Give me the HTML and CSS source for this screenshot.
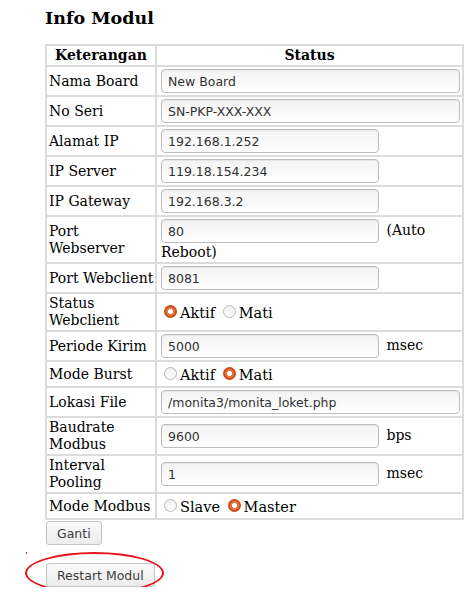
FILE: index.html
```html
<!DOCTYPE html>
<html>
<head>
<meta charset="utf-8">
<link rel="stylesheet" href="styles.css">
</head>
<body>
<div class="page">
  <h2 class="title">Info Modul</h2>
  <table class="info">
    <colgroup><col class="col1"><col class="col2"></colgroup>
    <tr><th>Keterangan</th><th>Status</th></tr>
    <tr><td>Nama Board</td><td><input class="long" value="New Board"></td></tr>
    <tr><td>No Seri</td><td><input class="long" value="SN-PKP-XXX-XXX"></td></tr>
    <tr><td>Alamat IP</td><td><input class="short" value="192.168.1.252"></td></tr>
    <tr><td>IP Server</td><td><input class="short" value="119.18.154.234"></td></tr>
    <tr><td>IP Gateway</td><td><input class="short" value="192.168.3.2"></td></tr>
    <tr><td>Port<br>Webserver</td><td class="wrapval"><input class="short" value="80"> (Auto Reboot)</td></tr>
    <tr><td>Port Webclient</td><td><input class="short" value="8081"></td></tr>
    <tr><td>Status<br>Webclient</td><td class="radios"><span class="radio on"></span>Aktif <span class="radio"></span>Mati</td></tr>
    <tr><td>Periode Kirim</td><td><input class="short" value="5000"> msec</td></tr>
    <tr><td>Mode Burst</td><td class="radios"><span class="radio"></span>Aktif <span class="radio on"></span>Mati</td></tr>
    <tr><td>Lokasi File</td><td><input class="long" value="/monita3/monita_loket.php"></td></tr>
    <tr><td>Baudrate<br>Modbus</td><td><input class="short" value="9600"> bps</td></tr>
    <tr><td>Interval<br>Pooling</td><td><input class="short" value="1"> msec</td></tr>
    <tr><td>Mode Modbus</td><td class="radios"><span class="radio"></span>Slave <span class="radio on"></span>Master</td></tr>
  </table>
  <div class="actions">
    <button class="btn">Ganti</button>
    <div class="restart">
      <button class="btn">Restart Modul</button>
      <span class="ellipse"></span>
      <span class="dot d1"></span>
      <span class="dot d2"></span>
    </div>
  </div>
</div>
</body>
</html>
```

FILE: styles.css
```css
html, body {
  margin: 0;
  padding: 0;
  background: #ffffff;
}
.page {
  padding: 8px 0 0 45px;
  font-family: "DejaVu Serif", serif;
  color: #000;
}
.title {
  margin: 0 0 15px 0;
  font-size: 17.5px;
  font-weight: bold;
  line-height: 21px;
}
.info {
  border-collapse: collapse;
  table-layout: fixed;
  width: 419px;
  border: 1px solid #dadada;
}
.col1 { width: 110px; }
.info th, .info td {
  border: 2px solid #dcdcdc;
  font-size: 14px;
  line-height: 17px;
  padding: 1px 2px;
  text-align: left;
  vertical-align: middle;
  white-space: nowrap;
}
.info th {
  font-weight: bold;
  text-align: center;
  padding: 1px 2px 1px;
}
.info td + td {
  padding-left: 4px;
  white-space: normal;
}
input {
  box-sizing: border-box;
  height: 24px;
  margin: 1px 0;
  padding: 0 6px;
  border: 1px solid #bdbdbd;
  border-radius: 4px;
  background: linear-gradient(#f3f3f3, #fafafa 60%, #ffffff);
  font-family: "DejaVu Sans", sans-serif;
  font-size: 12.5px;
  color: #333;
  vertical-align: middle;
  box-shadow: inset 0 1px 1px rgba(0,0,0,0.06);
}
input.long { width: 299px; }
input.short { width: 218px; margin-right: 3px; }
.info td.radios {
  padding-top: 5px;
  padding-bottom: 2px;
  font-size: 14.5px;
}
.radio {
  display: inline-block;
  box-sizing: border-box;
  width: 13px;
  height: 13px;
  border-radius: 50%;
  border: 1px solid #b8b8b8;
  background: linear-gradient(#f0f0f0, #ffffff);
  vertical-align: 0px;
  margin: 0 3px 0 3px;
}
.radio.on {
  border: none;
  background: radial-gradient(circle, #ffffff 0 2.2px, #e8743c 2.8px 4px, #c94b1b 5.2px 6.5px);
}
.actions {
  padding-top: 1px;
}
.btn {
  display: block;
  height: 24px;
  padding: 0 10px;
  border: 1px solid #c4c4c4;
  border-radius: 3px;
  background: linear-gradient(#fafafa, #ececec);
  font-family: "DejaVu Sans", sans-serif;
  font-size: 12.5px;
  color: #3c3c3c;
  margin: 0 0 0 1px;
}
.restart {
  position: relative;
  margin-top: 18px;
  width: 120px;
}
.ellipse {
  position: absolute;
  left: -20px;
  top: -11px;
  width: 135px;
  height: 38px;
  border: 2px solid #e8141a;
  border-radius: 50%;
}
.dot {
  position: absolute;
  width: 1px;
  height: 2px;
  background: #e8141a;
}
.d1 { left: -19px; top: -11px; }
.d2 { left: 119px; top: 29px; }
```
